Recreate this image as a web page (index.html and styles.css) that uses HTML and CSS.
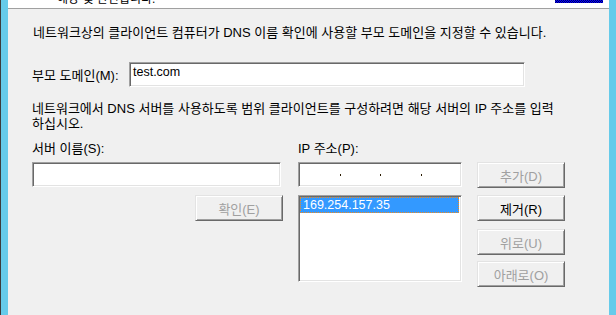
FILE: index.html
```html
<!DOCTYPE html>
<html lang="ko">
<head>
<meta charset="utf-8">
<link rel="stylesheet" href="styles.css">
</head>
<body>
<div class="edge-left"><div class="edge-dark"></div><div class="edge-blue"></div></div>
<div class="main">
  <div class="topband">
    <span class="cut-text">해당 및 관련됩니다.</span>
    <span class="focus-bar"></span>
  </div>
  <div class="content">
    <p class="line intro">네트워크상의 클라이언트 컴퓨터가 DNS 이름 확인에 사용할 부모 도메인을 지정할 수 있습니다.</p>
    <div class="domain-row">
      <label class="domain-label">부모 도메인(M):</label>
      <div class="field domain-field">test.com</div>
    </div>
    <p class="line desc">네트워크에서 DNS 서버를 사용하도록 범위 클라이언트를 구성하려면 해당 서버의 IP 주소를 입력<br>하십시오.</p>
    <div class="cols">
      <div class="col col-name">
        <div class="line label">서버 이름(S):</div>
        <div class="field name-field"></div>
        <button class="btn disabled resolve">확인(E)</button>
      </div>
      <div class="col col-ip">
        <div class="line label">IP 주소(P):</div>
        <div class="field ip-field">
          <span class="seg"></span><span class="dot"></span>
          <span class="seg"></span><span class="dot"></span>
          <span class="seg"></span><span class="dot"></span>
          <span class="seg"></span>
        </div>
        <div class="field listbox">
          <div class="item selected">169.254.157.35</div>
        </div>
      </div>
      <div class="col col-btns">
        <button class="btn disabled">추가(D)</button>
        <button class="btn">제거(R)</button>
        <button class="btn disabled">위로(U)</button>
        <button class="btn disabled">아래로(O)</button>
      </div>
    </div>
  </div>
</div>
<div class="edge-right"></div>
</body>
</html>
```

FILE: styles.css
```css
html, body {
  margin: 0;
  padding: 0;
}
body {
  width: 616px;
  height: 315px;
  overflow: hidden;
  display: flex;
  background: #f0f0f0;
  font-family: "Liberation Sans", "Noto Sans CJK KR", sans-serif;
  font-size: 13px;
  color: #000;
}
.edge-left {
  display: flex;
  width: 8px;
  flex: none;
}
.edge-dark {
  width: 1px;
  background: #3c3c3c;
}
.edge-blue {
  flex: 1;
  background: #66cbea;
}
.edge-right {
  width: 7px;
  flex: none;
  background: #66cbea;
}
.main {
  flex: 1;
  display: flex;
  flex-direction: column;
  min-width: 0;
}
.topband {
  height: 8px;
  background: #fff;
  border-bottom: 1px solid #a0a0a0;
  overflow: hidden;
  display: flex;
  justify-content: space-between;
  align-items: flex-start;
  padding: 0 6px 0 49px;
}
.cut-text {
  line-height: 15px;
  margin-top: -8px;
  white-space: nowrap;
  font-size: 12px;
}
.focus-bar {
  width: 48px;
  height: 3px;
  background: repeating-conic-gradient(#0000ff 0 25%, #000060 0 50%) 0 0 / 2px 2px;
}
.content {
  padding-left: 24px;
}
.line {
  margin: 0;
  line-height: 15px;
  white-space: nowrap;
}
.intro {
  margin-top: 16px;
  padding-left: 1px;
}
.domain-row {
  margin-top: 22px;
  display: flex;
  align-items: center;
  height: 25px;
}
.domain-label {
  width: 97px;
  flex: none;
}
.field {
  box-sizing: border-box;
  background: #fff;
  border: 1px solid;
  border-color: #a0a0a0 #fff #fff #a0a0a0;
  box-shadow: inset 1px 1px 0 #696969, inset -1px -1px 0 #e3e3e3;
}
.domain-field {
  width: 396px;
  height: 25px;
  padding: 1px 3px;
  line-height: 17px;
  font-size: 12.5px;
}
.desc {
  margin-top: 14px;
}
.cols {
  margin-top: 10px;
  display: flex;
  gap: 15px;
}
.col {
  display: flex;
  flex-direction: column;
}
.col-name {
  width: 251px;
}
.label {
  height: 15px;
}
.name-field {
  margin-top: 6px;
  width: 249px;
  height: 25px;
}
.btn {
  box-sizing: border-box;
  width: 88px;
  height: 26px;
  padding: 0;
  font: inherit;
  color: #000;
  background: #f0f0f0;
  border: 1px solid;
  border-color: #e3e3e3 #696969 #696969 #e3e3e3;
  box-shadow: inset 1px 1px 0 #fff, inset -1px -1px 0 #a0a0a0;
}
.btn.disabled {
  color: #a0a0a0;
}
.resolve {
  margin-top: 8px;
  align-self: flex-end;
}
.col-ip {
  width: 164px;
}
.ip-field {
  margin-top: 6px;
  height: 25px;
  display: flex;
  align-items: center;
  padding-left: 1px;
}
.seg {
  width: 40px;
  height: 1px;
}
.dot {
  width: 1px;
  height: 2px;
  margin-top: 1px;
  background: #2a1a00;
}
.listbox {
  margin-top: 8px;
  height: 87px;
  padding: 1px 2px 1px 1px;
}
.item {
  height: 16px;
  line-height: 16px;
  padding-left: 3px;
  font-size: 12.5px;
}
.selected {
  background: #3399ff;
  color: #fff;
  outline: 1px dotted #f08a1c;
  outline-offset: -1px;
}
.col-btns {
  padding-top: 21px;
  gap: 7px;
}
.col-btns .btn:nth-child(3) {
  margin-top: 1px;
}
.col-btns .btn:nth-child(4) {
  margin-top: -1px;
}
```
